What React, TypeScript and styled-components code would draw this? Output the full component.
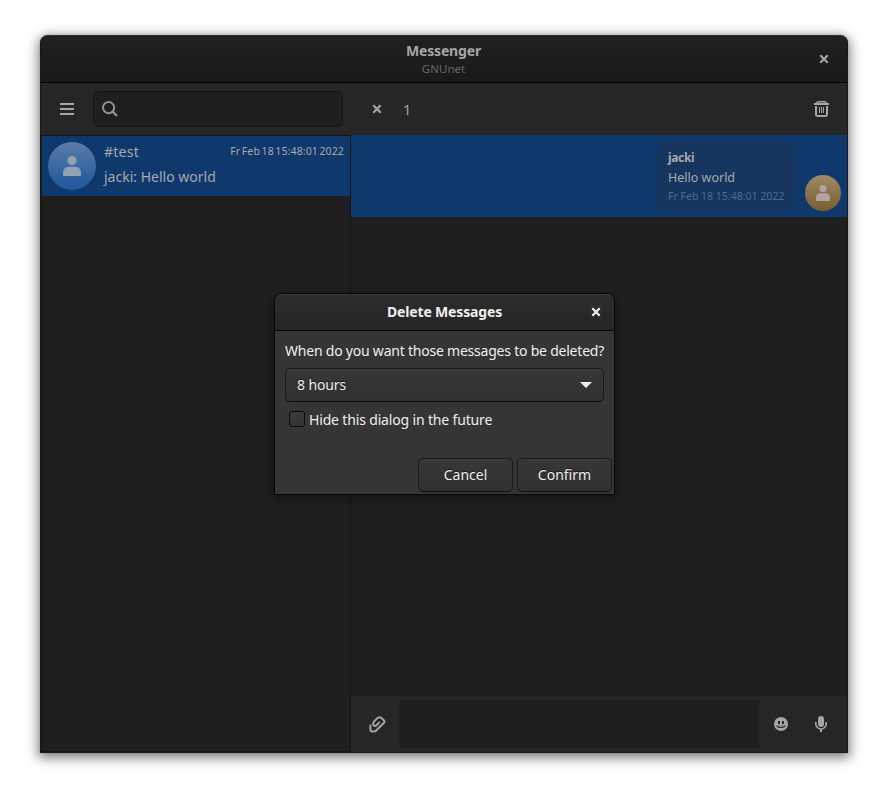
import React from "react";
import styled, { createGlobalStyle } from "styled-components";

const GlobalStyle = createGlobalStyle`
  * { box-sizing: border-box; }
  body { margin: 0; background: #fff; }
`;

const Desktop = styled.div`
  position: relative;
  height: 789px;
  padding: 35px 39px 36px 40px;
  overflow: hidden;
  font-family: "Noto Sans", "Open Sans", sans-serif;
  font-size: 14px;
  line-height: 20px;
  white-space: pre;
`;

const Label = styled.span<{ $size?: number; $track?: number; $words?: number; $bold?: boolean; $color?: string }>`
  font-size: ${(p) => p.$size ?? 14}px;
  font-weight: ${(p) => (p.$bold ? 700 : 400)};
  letter-spacing: ${(p) => p.$track ?? 0}px;
  word-spacing: ${(p) => p.$words ?? 0}px;
  color: ${(p) => p.$color ?? "#a5a9ad"};
`;

const Window = styled.div`
  height: 718px;
  display: flex;
  flex-direction: column;
  border: 1px solid #191919;
  border-top-color: #303232;
  border-radius: 8px 8px 0 0;
  background: #1f1f1f;
  overflow: hidden;
  box-shadow: 0 3px 12px 2px rgba(0, 0, 0, 0.5), 0 0 1px rgba(0, 0, 0, 0.5);
`;

const TitleBar = styled.header`
  display: grid;
  grid-template-columns: 46px 1fr 46px;
  align-items: center;
  height: 47px;
  flex: none;
  border-bottom: 1px solid #040404;
  background: linear-gradient(#202020, #1a1a1a);
`;

const TitleStack = styled.div`
  grid-column: 2;
  display: flex;
  flex-direction: column;
  align-items: center;
  padding: 1px 1px 0 0;
  ${Label} { line-height: 18px; }
`;

const Panes = styled.div`
  display: grid;
  grid-template-columns: 310px 1fr;
  flex: 1;
  min-height: 0;
`;

const Pane = styled.section`
  display: flex;
  flex-direction: column;
  min-height: 0;
`;

const Toolbar = styled.div`
  display: flex;
  align-items: center;
  height: 52px;
  flex: none;
  background: #262626;
`;

const IconButton = styled.button<{ $width?: number }>`
  display: flex;
  align-items: center;
  justify-content: center;
  width: ${(p) => p.$width ?? 40}px;
  height: 40px;
  flex: none;
  padding: 0;
  border: 0;
  background: none;
  color: #a5a5a4;
`;

const ToolbarEnd = styled.div`
  margin-left: auto;
`;

const SearchField = styled.div`
  display: flex;
  align-items: center;
  width: 250px;
  height: 36px;
  padding-left: 8px;
  border: 1px solid #151515;
  border-radius: 5px;
  background: #1f1f1f;
  color: #929292;
`;

const ContactList = styled.div`
  flex: 1;
  border: 1px solid #151515;
  background: #1f1f1f;
`;

const ContactRow = styled.div`
  display: flex;
  align-items: center;
  gap: 8px;
  height: 60px;
  padding: 0 6px;
  background: #0f396c;
`;

const Avatar = styled.div<{ $size: number; $from: string; $to: string; $fg: string }>`
  display: flex;
  align-items: center;
  justify-content: center;
  width: ${(p) => p.$size}px;
  height: ${(p) => p.$size}px;
  flex: none;
  border-radius: 50%;
  background: linear-gradient(${(p) => p.$from}, ${(p) => p.$to});
  color: ${(p) => p.$fg};
`;

const ContactText = styled.div`
  display: flex;
  flex-direction: column;
  gap: 5px;
  flex: 1;
  padding-bottom: 3px;
`;

const ContactTop = styled.div`
  display: flex;
  justify-content: space-between;
  height: 20px;
  ${Label}:last-child { line-height: 18px; }
`;

const ChatLog = styled.div`
  flex: 1;
  background: #1f1f1f;
`;

const MessageRow = styled.div`
  display: flex;
  justify-content: flex-end;
  align-items: flex-end;
  gap: 8px;
  height: 82px;
  padding: 6px;
  background: #0f396c;
`;

const Bubble = styled.div`
  display: flex;
  flex-direction: column;
  width: 141px;
  height: 70px;
  padding: 7px 12px 0;
  border-radius: 13px;
  background: #17365f;
  ${Label}:last-child { line-height: 17px; }
`;

const Composer = styled.div`
  display: flex;
  align-items: center;
  height: 56px;
  flex: none;
  padding: 0 6px;
  background: #262626;
`;

const ComposerInput = styled.div`
  flex: 1;
  height: 48px;
  margin: 0 2px;
  background: #1f1f1f;
`;

const Dialog = styled.div`
  position: absolute;
  left: 274px;
  top: 293px;
  width: 341px;
  height: 202px;
  display: flex;
  flex-direction: column;
  border: 1px solid #080808;
  border-radius: 8px 8px 0 0;
  background: #353535;
  overflow: hidden;
  box-shadow: 0 3px 10px 1px rgba(0, 0, 0, 0.4);
`;

const DialogHeader = styled.div`
  display: grid;
  grid-template-columns: 36px 1fr 36px;
  align-items: center;
  justify-items: center;
  height: 37px;
  flex: none;
  border-bottom: 1px solid #090909;
  background: linear-gradient(#2d2d2d, #262626);
  box-shadow: inset 0 1px #383838;
  ${Label} { grid-column: 2; }
  ${IconButton} { color: #eeeeec; height: 36px; }
`;

const DialogBody = styled.div`
  display: flex;
  flex-direction: column;
  flex: 1;
  padding: 10px 10px 0;
`;

const Control = styled.div<{ $width?: number }>`
  display: flex;
  align-items: center;
  justify-content: center;
  width: ${(p) => (p.$width ? `${p.$width}px` : "auto")};
  height: 34px;
  border: 1px solid #1b1b1b;
  border-bottom-color: #0c0c0c;
  border-radius: 5px;
  background: linear-gradient(#373737, #313131);
  box-shadow: inset 0 1px #3b3b3b;
  text-shadow: 0 -1px rgba(0, 0, 0, 0.6);
`;

const Combo = styled(Control)`
  justify-content: space-between;
  margin-top: 7px;
  padding: 0 11px;
`;

const CheckRow = styled.label`
  display: flex;
  align-items: center;
  gap: 4px;
  margin: 8px 0 0 4px;
`;

const CheckBox = styled.span`
  width: 16px;
  height: 16px;
  margin-bottom: 2px;
  border: 1px solid #0b0b0b;
  border-radius: 3px;
  background: linear-gradient(#3b3b3b, #343434);
`;

const Actions = styled.div`
  display: flex;
  justify-content: flex-end;
  gap: 4px;
  padding: 0 2px 2px;
`;

function CloseIcon() {
  return (
    <svg width="10" height="10" viewBox="0 0 10 10" fill="none" stroke="currentColor" strokeWidth="2.2">
      <path d="M1.3 1.3 8.7 8.7M8.7 1.3 1.3 8.7" />
    </svg>
  );
}

function MenuIcon() {
  return (
    <svg width="14" height="12" viewBox="0 0 14 12" fill="currentColor">
      <path d="M0 0h14v2H0zM0 5h14v2H0zM0 10h14v2H0z" />
    </svg>
  );
}

function SearchIcon() {
  return (
    <svg width="16" height="16" viewBox="0 0 16 16" fill="none" stroke="currentColor" strokeWidth="2">
      <circle cx="6.6" cy="6.6" r="5.6" />
      <path d="M10.6 10.6 15 15" strokeWidth="2.2" />
    </svg>
  );
}

function TrashIcon() {
  return (
    <svg width="15" height="16" viewBox="0 0 15 16" fill="none" stroke="currentColor">
      <path d="M0 3h15" strokeWidth="2" />
      <path d="M2.6 2.4Q3 .75 4.4 .75h6.2Q12 .75 12.4 2.4" strokeWidth="1.5" />
      <path d="M2 5v8.6Q2 15 3.4 15h8.2q1.4 0 1.4-1.4V5" strokeWidth="2" />
      <path d="M5.5 6v6M7.5 6v6M9.5 6v6" strokeWidth="1" />
    </svg>
  );
}

function PersonIcon({ size }: { size: number }) {
  return (
    <svg width={size} height={size * 1.16} viewBox="0 0 18 21" fill="currentColor">
      <circle cx="9" cy="4.6" r="4.6" />
      <path d="M0 20v-3.4C0 13 3 10.8 6 10.8h6c3 0 6 2.2 6 5.8V20q0 1-1 1H1q-1 0-1-1z" />
    </svg>
  );
}

function AttachIcon() {
  return (
    <svg width="17" height="17" viewBox="0 0 17 17" fill="none" stroke="currentColor" strokeWidth="2">
      <path d="M1.4 8.6v4.6q0 2.2 2 2.2h1.8q1 0 1.7-.7L14.8 7q1.2-1.1.2-2.5L12.8 2.2q-1.3-1.1-2.9-.8-1 .2-1.8 1L5 5.6Q3.7 7 4.3 8.8q.8 1.5 2.4.9.7-.2 1.3-.9l2.7-2.9" />
    </svg>
  );
}

function SmileIcon() {
  return (
    <svg width="14" height="14" viewBox="0 0 14 14">
      <circle cx="7" cy="7" r="7" fill="currentColor" />
      <path d="M4 4h2v3H4zM8 4h2v3H8z" fill="#262626" />
      <path d="M2.2 8.4q4.8.9 9.6 0-1.2 2.6-4.8 2.6T2.2 8.4z" fill="#262626" />
      <path d="M3.4 9.1q3.6.5 7.2 0-1.2 1.1-3.6 1.1t-3.6-1.1z" fill="currentColor" />
    </svg>
  );
}

function MicIcon() {
  return (
    <svg width="14" height="16" viewBox="0 0 14 16" fill="none" stroke="currentColor">
      <rect x="4" y="0" width="6" height="11" rx="3" fill="currentColor" stroke="none" />
      <path d="M1.8 6v1.8a5.2 5.2 0 0 0 10.4 0V6" strokeWidth="1.6" />
      <path d="M7 13v3" strokeWidth="2" />
    </svg>
  );
}

function DropArrow() {
  return (
    <svg width="12" height="6" viewBox="0 0 12 6" fill="#eeeeec">
      <path d="M0 0h12L6 6z" />
    </svg>
  );
}

const light = "#eeeeec";

export default function App() {
  return (
    <Desktop>
      <GlobalStyle />
      <Window>
        <TitleBar>
          <TitleStack>
            <Label $bold $track={-0.17} $color="#a5a5a4">Messenger</Label>
            <Label $size={11.5} $color="#676767">GNUnet</Label>
          </TitleStack>
          <IconButton $width={46}><CloseIcon /></IconButton>
        </TitleBar>
        <Panes>
          <Pane>
            <Toolbar>
              <IconButton $width={52}><MenuIcon /></IconButton>
              <SearchField><SearchIcon /></SearchField>
            </Toolbar>
            <ContactList>
              <ContactRow>
                <Avatar $size={48} $from="#597da8" $to="#20569a" $fg="#93a2b3"><PersonIcon size={18} /></Avatar>
                <ContactText>
                  <ContactTop>
                    <Label $track={0.25}>#test</Label>
                    <Label $size={10.5} $track={0.12} $words={-1.3}>Fr Feb 18 15:48:01 2022</Label>
                  </ContactTop>
                  <Label>jacki: Hello world</Label>
                </ContactText>
              </ContactRow>
            </ContactList>
          </Pane>
          <Pane>
            <Toolbar>
              <IconButton $width={52}><CloseIcon /></IconButton>
              <Label $size={14.5} $color="#a5a5a4">1</Label>
              <ToolbarEnd><IconButton $width={51}><TrashIcon /></IconButton></ToolbarEnd>
            </Toolbar>
            <ChatLog>
              <MessageRow>
                <Bubble>
                  <Label $bold $size={12} $track={-0.35}>jacki</Label>
                  <Label $size={12.5}>Hello world</Label>
                  <Label $size={10.5} $color="#506a8a">Fr Feb 18 15:48:01 2022</Label>
                </Bubble>
                <Avatar $size={36} $from="#9d8b63" $to="#7b5c30" $fg="#ada59f"><PersonIcon size={14} /></Avatar>
              </MessageRow>
            </ChatLog>
            <Composer>
              <IconButton><AttachIcon /></IconButton>
              <ComposerInput />
              <IconButton><SmileIcon /></IconButton>
              <IconButton><MicIcon /></IconButton>
            </Composer>
          </Pane>
        </Panes>
      </Window>
      <Dialog>
        <DialogHeader>
          <Label $bold $track={-0.16} $color={light}>Delete Messages</Label>
          <IconButton $width={36}><CloseIcon /></IconButton>
        </DialogHeader>
        <DialogBody>
          <Label $track={-0.22} $color={light}>When do you want those messages to be deleted?</Label>
          <Combo>
            <Label $track={-0.13} $color={light}>8 hours</Label>
            <DropArrow />
          </Combo>
          <CheckRow>
            <CheckBox />
            <Label $track={-0.16} $color={light}>Hide this dialog in the future</Label>
          </CheckRow>
        </DialogBody>
        <Actions>
          <Control $width={95}><Label $color={light}>Cancel</Label></Control>
          <Control $width={95}><Label $color={light}>Confirm</Label></Control>
        </Actions>
      </Dialog>
    </Desktop>
  );
}
